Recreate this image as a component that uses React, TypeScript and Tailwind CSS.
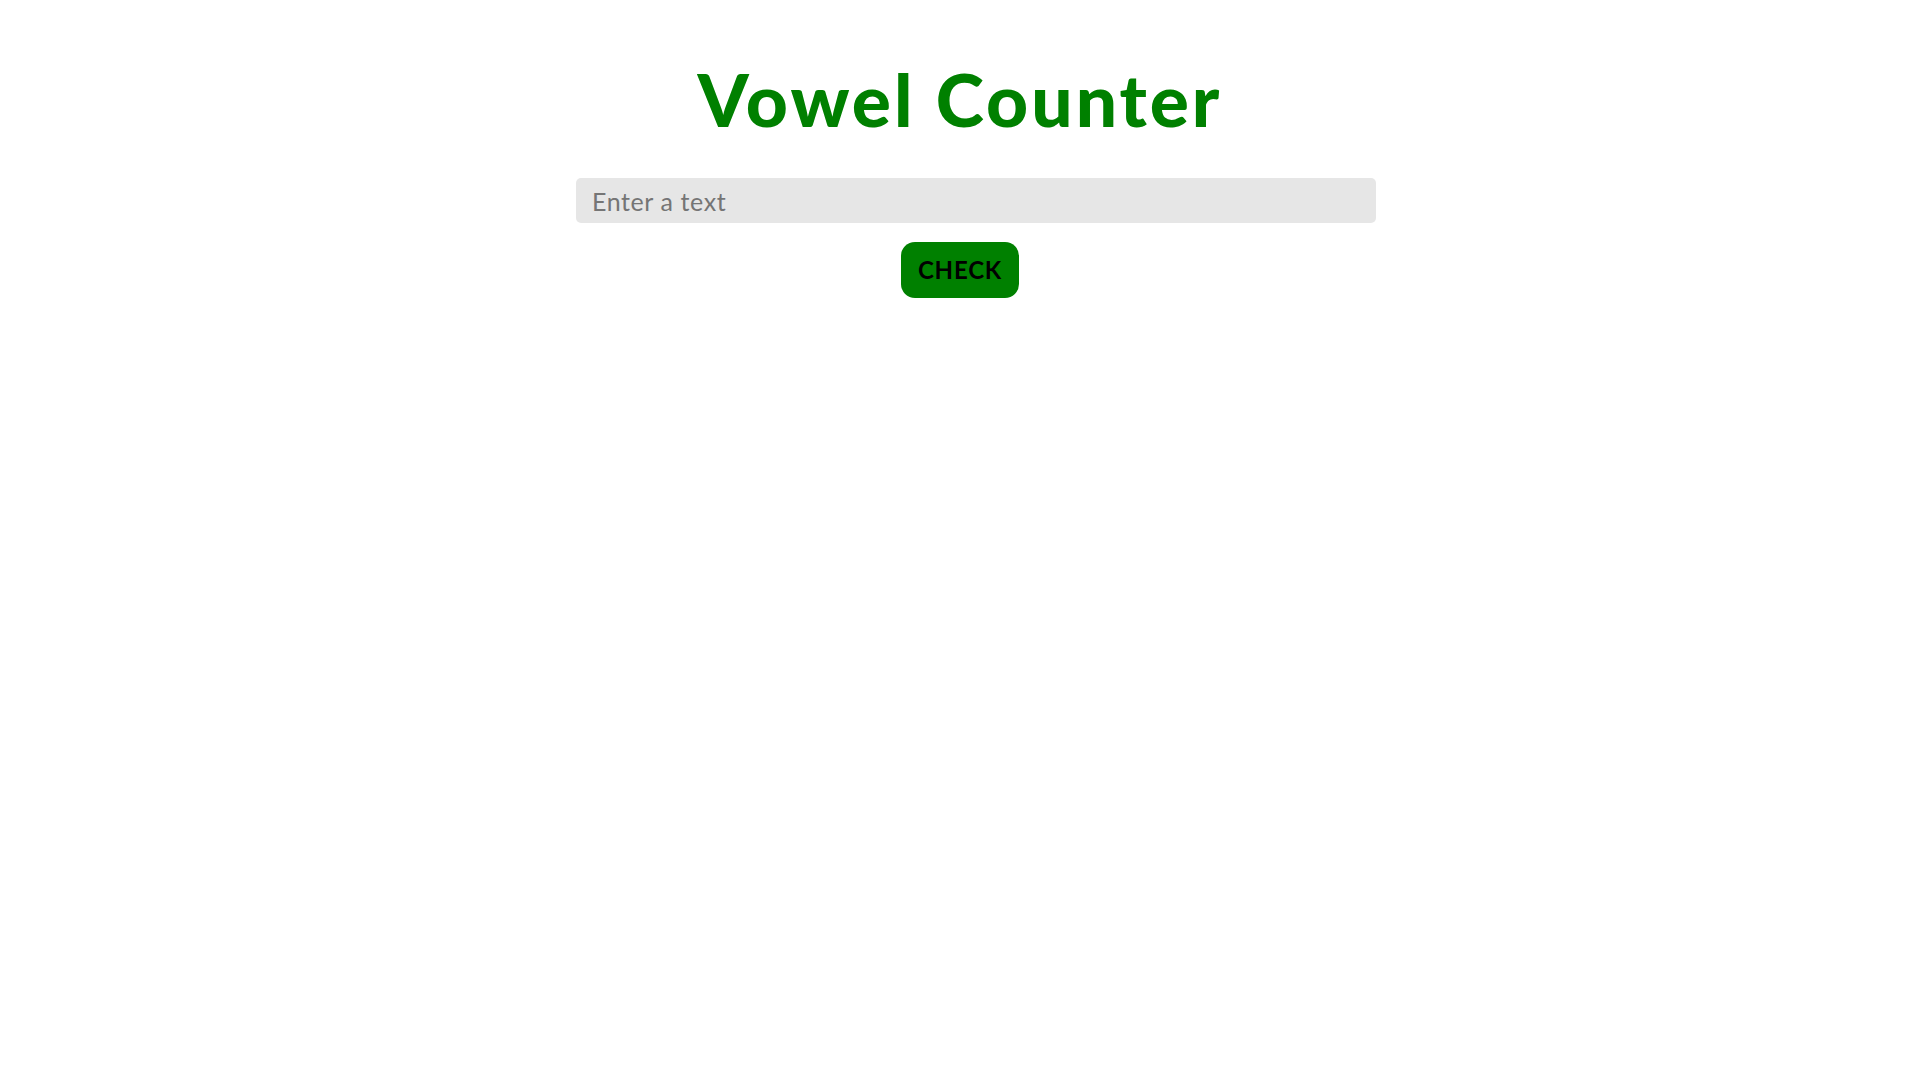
import { useState } from "react";

const App = () => {
  const [text, setText] = useState("");

  return (
    <div className="min-h-screen bg-white flex flex-col items-center font-['Lato','Noto_Sans',sans-serif]">
      <h1 className="mt-[56px] text-[73px] leading-[86px] font-black tracking-[3px] text-[#008000]">Vowel Counter</h1>
      <input
        type="text"
        value={text}
        onChange={(e) => setText(e.target.value)}
        placeholder="Enter a text"
        className="mt-[36px] ml-[32px] w-[800px] h-[45px] px-4 rounded-[5px] bg-[#e6e6e6] text-[25px] tracking-[0.6px] text-black placeholder:text-[#757575] outline-none"
      />
      <button className="mt-[19px] w-[118px] h-[56px] rounded-[14px] bg-[#008000] text-[24px] font-bold tracking-[0.8px] text-black">
        CHECK
      </button>
    </div>
  );
};

export default App;
